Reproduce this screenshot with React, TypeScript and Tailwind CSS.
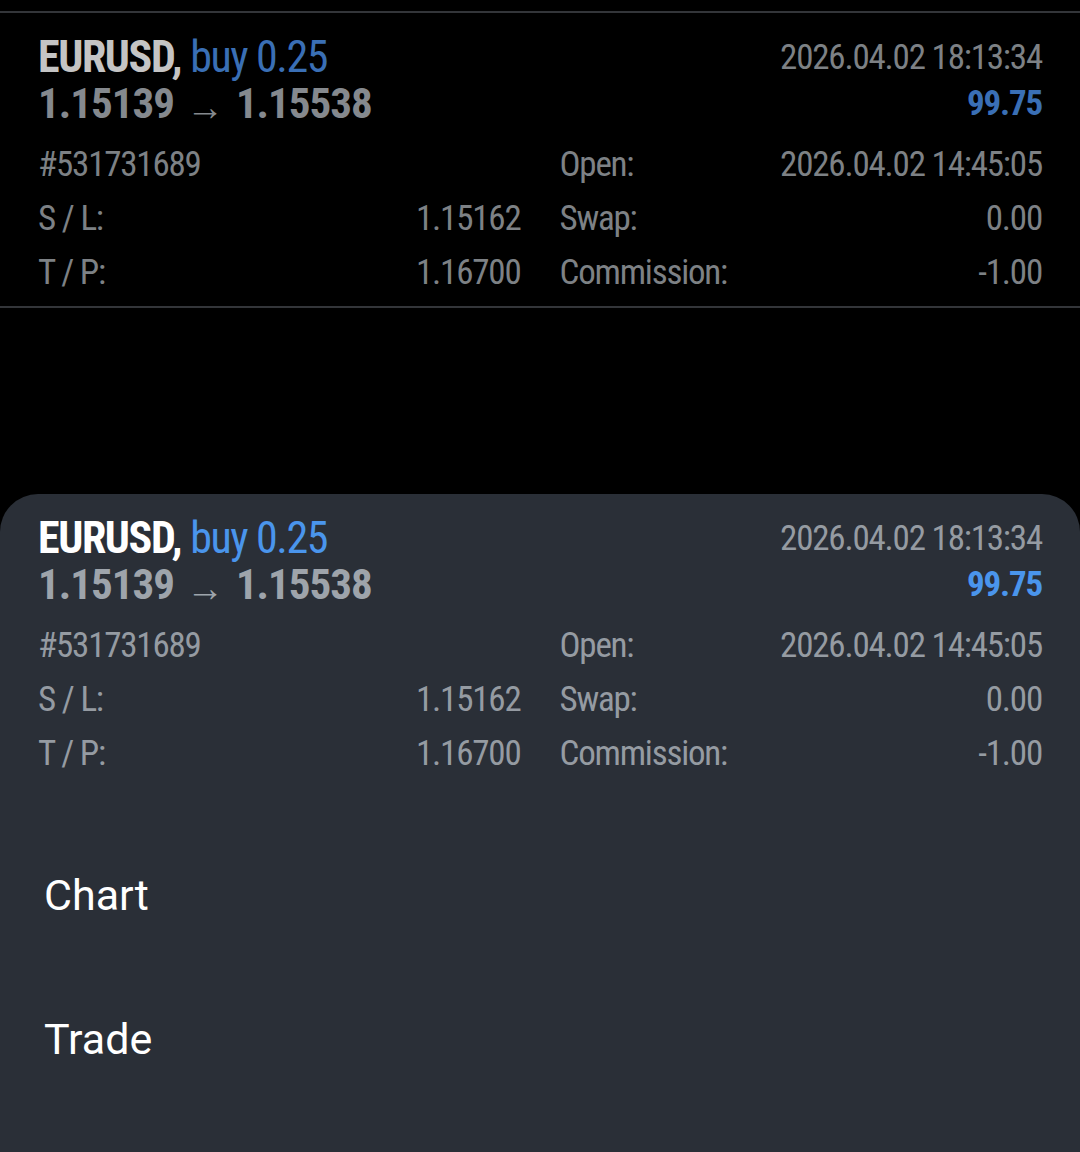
import React from "react"

type Theme = {
  sym: string
  buy: string
  price: string
  label: string
  profit: string
}

const dim: Theme = {
  sym: "text-[#c4c4c4]",
  buy: "text-[#3a6fb5]",
  price: "text-[#85898e]",
  label: "text-[#7d8185]",
  profit: "text-[#3a6fb5]",
}

const lit: Theme = {
  sym: "text-white",
  buy: "text-[#4a95ec]",
  price: "text-[#9ea4ab]",
  label: "text-[#959ba2]",
  profit: "text-[#4a95ec]",
}

function Row({ label, value }: { label: string; value?: string }) {
  return (
    <div className="flex h-[54px] items-center justify-between">
      <span>{label}</span>
      {value && <span>{value}</span>}
    </div>
  )
}

function Position({ t }: { t: Theme }) {
  return (
    <div className="h-[293px] px-[38px] pt-[21px] font-['Roboto_Condensed','Roboto',sans-serif] font-stretch-condensed tracking-[-1.2px]">
      <div className="flex justify-between">
        <div>
          <div className="flex h-[46px] items-center text-[44px] leading-none tracking-[-1.4px]">
            <span className={`font-bold ${t.sym}`}>EURUSD,</span>
            <span className={`ml-[9px] ${t.buy}`}>buy 0.25</span>
          </div>
          <div className={`flex h-[46px] items-center text-[43px] leading-none font-bold tracking-[-1px] ${t.price}`}>
            <span>1.15139</span>
            <span className="mx-[12px] mt-[8px] text-[38px] font-normal tracking-normal">→</span>
            <span>1.15538</span>
          </div>
        </div>
        <div className="flex flex-col items-end">
          <div className={`flex h-[46px] items-center text-[35px] leading-none ${t.label}`}>2026.04.02 18:13:34</div>
          <div className={`flex h-[46px] items-center text-[35px] leading-none font-bold ${t.profit}`}>99.75</div>
        </div>
      </div>
      <div className={`grid grid-cols-2 gap-x-[39px] pt-[11px] text-[35px] leading-none ${t.label}`}>
        <Row label="#531731689" />
        <Row label="Open:" value="2026.04.02 14:45:05" />
        <Row label="S / L:" value="1.15162" />
        <Row label="Swap:" value="0.00" />
        <Row label="T / P:" value="1.16700" />
        <Row label="Commission:" value="-1.00" />
      </div>
    </div>
  )
}

export default function App() {
  return (
    <div className="h-[1152px] w-[1080px] overflow-hidden bg-black flex flex-col">
      <div className="mt-[11px] border-y-2 border-[#333539] bg-black">
        <Position t={dim} />
      </div>
      <div className="mt-[186px] flex-1 rounded-t-[38px] bg-[#2a2f37]">
        <Position t={lit} />
        <div className="px-[44px] pt-[36px] font-['Roboto',sans-serif] text-[43px] text-white">
          <div className="h-[144px] flex items-center">Chart</div>
          <div className="h-[144px] flex items-center">Trade</div>
        </div>
      </div>
    </div>
  )
}
